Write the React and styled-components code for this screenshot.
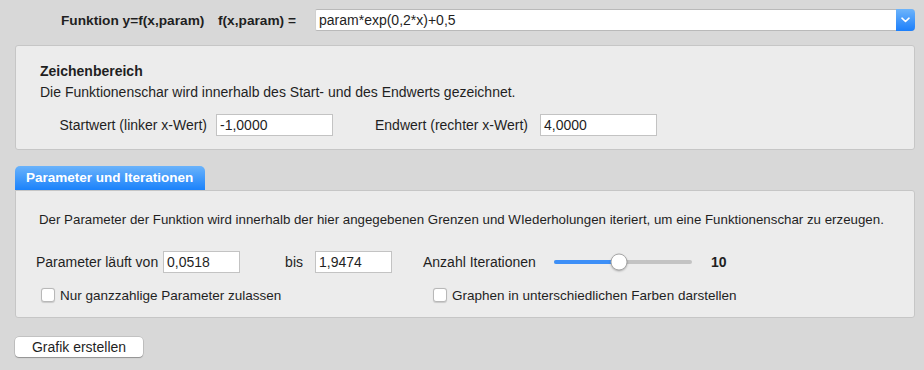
import React from "react";
import styled, { createGlobalStyle } from "styled-components";

const GlobalStyle = createGlobalStyle`
  html, body {
    margin: 0;
    padding: 0;
    background: #d8d8d8;
  }
  body {
    font-family: "Liberation Sans", Arial, sans-serif;
    font-size: 14px;
    color: #1f1f1f;
  }
  * {
    box-sizing: border-box;
  }
`;

const Page = styled.div`
  width: 924px;
  height: 370px;
  padding: 9px 9px 0 15px;
  display: flex;
  flex-direction: column;
`;

const TopRow = styled.div`
  display: flex;
  align-items: center;
  height: 22px;
  padding-left: 46px;
`;

const BoldLabel = styled.span`
  font-weight: 700;
  font-size: 13.7px;
  white-space: nowrap;
  width: ${(p) => p.$w}px;
  flex: none;
`;

const Combo = styled.div`
  flex: 1;
  display: flex;
  height: 22px;
  background: #fff;
  border-top: 1px solid #b9b9b9;
  border-bottom: 1px solid #b9b9b9;
  border-left: 1px solid #d0d0d0;
  border-radius: 2px 4px 4px 2px;
`;

const ComboText = styled.div`
  flex: 1;
  padding-left: 3px;
  line-height: 20px;
`;

const ComboButton = styled.div`
  width: 19px;
  margin: -1px 0;
  border-radius: 0 4px 4px 0;
  background: linear-gradient(#6db4fb, #1c7ffb);
  display: flex;
  align-items: center;
  justify-content: center;
`;

const Panel = styled.div`
  background: #ececec;
  border: 1px solid #c6c6c6;
  border-radius: ${(p) => (p.$tabbed ? "0 3px 3px 3px" : "3px")};
  height: ${(p) => p.$h}px;
  margin-top: ${(p) => p.$mt || 0}px;
  padding: ${(p) => p.$pad};
  display: flex;
  flex-direction: column;
`;

const Title = styled.div`
  font-weight: 700;
  line-height: 16px;
`;

const Text = styled.div`
  line-height: 16px;
  font-size: ${(p) => p.$size || 14}px;
  margin-top: ${(p) => p.$mt || 0}px;
  padding-left: ${(p) => p.$pl || 0}px;
  white-space: nowrap;
`;

const Row = styled.div`
  display: flex;
  align-items: center;
  height: 22px;
  margin-top: ${(p) => p.$mt || 0}px;
`;

const Label = styled.span`
  flex: none;
  white-space: nowrap;
  width: ${(p) => p.$w}px;
  text-align: ${(p) => p.$align || "left"};
  padding: ${(p) => p.$pad || 0};
`;

const Input = styled.div`
  flex: none;
  width: ${(p) => p.$w}px;
  height: 22px;
  background: #fff;
  border: 1px solid #c3c3c3;
  padding-left: 3px;
  line-height: 20px;
`;

const TabBar = styled.div`
  display: flex;
  margin-top: 16px;
`;

const Tab = styled.div`
  height: 24px;
  width: 190px;
  padding-left: 11px;
  border-radius: 5px 5px 0 0;
  background: linear-gradient(#6ab3fb, #1b82fb);
  color: #fff;
  font-weight: 700;
  font-size: 13.5px;
  line-height: 24px;
  white-space: nowrap;
`;

const Slider = styled.div`
  position: relative;
  width: 138px;
  height: 4px;
  flex: none;
  border-radius: 2px;
  background: #c3c3c3;
`;

const SliderFill = styled.div`
  height: 100%;
  border-radius: 2px;
  background: #3d8ff7;
`;

const Thumb = styled.div`
  position: absolute;
  top: 50%;
  width: 17px;
  height: 17px;
  border-radius: 50%;
  background: #fff;
  border: 0.5px solid #a8a8a8;
  box-shadow: 0 1px 2px rgba(0, 0, 0, 0.25);
  transform: translate(-50%, -50%);
`;

const Value = styled.span`
  font-weight: 700;
  margin-left: 19px;
`;

const CheckRow = styled.div`
  display: flex;
  align-items: center;
  height: 18px;
  margin-top: 13px;
  font-size: 13.5px;
`;

const Check = styled.label`
  display: flex;
  align-items: center;
  gap: 5px;
  width: ${(p) => (p.$w ? `${p.$w}px` : "auto")};
  padding-left: ${(p) => p.$pl || 0}px;
  flex: none;
  white-space: nowrap;
`;

const Box = styled.span`
  width: 14px;
  height: 14px;
  border-radius: 3px;
  background: #fff;
  border: 1px solid #b8b8b8;
  box-shadow: 0 0.5px 1px rgba(0, 0, 0, 0.15);
`;

const Button = styled.button`
  align-self: flex-start;
  margin-top: 19px;
  width: 128px;
  height: 20px;
  border: none;
  border-radius: 4px;
  background: #fff;
  box-shadow: 0 0 0 0.5px rgba(0, 0, 0, 0.2), 0 1px 1px rgba(0, 0, 0, 0.25);
  font-family: inherit;
  font-size: 14px;
  color: #1f1f1f;
  padding: 0;
`;

const Chevron = () => (
  <svg width="9" height="6" viewBox="0 0 9 6">
    <path d="M1 1.2 L4.5 4.5 L8 1.2" fill="none" stroke="#fff" strokeWidth="1.6" strokeLinecap="round" strokeLinejoin="round" />
  </svg>
);

const iterations = 10;
const maxIterations = 20;

export default function App() {
  const pct = ((iterations - 1) / (maxIterations - 1)) * 100;
  return (
    <>
      <GlobalStyle />
      <Page>
        <TopRow>
          <BoldLabel $w={157}>Funktion y=f(x,param)</BoldLabel>
          <BoldLabel $w={97}>f(x,param) =</BoldLabel>
          <Combo>
            <ComboText>param*exp(0,2*x)+0,5</ComboText>
            <ComboButton>
              <Chevron />
            </ComboButton>
          </Combo>
        </TopRow>

        <Panel $h={105} $mt={14} $pad="17px 0 0 24px">
          <Title>Zeichenbereich</Title>
          <Text $mt={5}>Die Funktionenschar wird innerhalb des Start- und des Endwerts gezeichnet.</Text>
          <Row $mt={14}>
            <Label $w={176} $align="right" $pad="0 9px 0 0">Startwert (linker x-Wert)</Label>
            <Input $w={117}>-1,0000</Input>
            <Label $w={207} $align="right" $pad="0 12px 0 0">Endwert (rechter x-Wert)</Label>
            <Input $w={117}>4,0000</Input>
          </Row>
        </Panel>

        <TabBar>
          <Tab>Parameter und Iterationen</Tab>
        </TabBar>
        <Panel $tabbed $h={128} $pad="21px 0 0 20px">
          <Text $pl={3} $size={13.3}>Der Parameter der Funktion wird innerhalb der hier angegebenen Grenzen und WIederholungen iteriert, um eine Funktionenschar zu erzeugen.</Text>
          <Row $mt={23}>
            <Label $w={127}>Parameter läuft von</Label>
            <Input $w={77}>0,0518</Input>
            <Label $w={75} $align="right" $pad="0 12px 0 0">bis</Label>
            <Input $w={77}>1,9474</Input>
            <Label $w={162} $pad="0 0 0 31px">Anzahl Iterationen</Label>
            <Slider>
              <SliderFill style={{ width: `${pct}%` }} />
              <Thumb style={{ left: `${pct}%` }} />
            </Slider>
            <Value>10</Value>
          </Row>
          <CheckRow>
            <Check $w={397} $pl={5}>
              <Box />
              Nur ganzzahlige Parameter zulassen
            </Check>
            <Check>
              <Box />
              Graphen in unterschiedlichen Farben darstellen
            </Check>
          </CheckRow>
        </Panel>

        <Button>Grafik erstellen</Button>
      </Page>
    </>
  );
}
